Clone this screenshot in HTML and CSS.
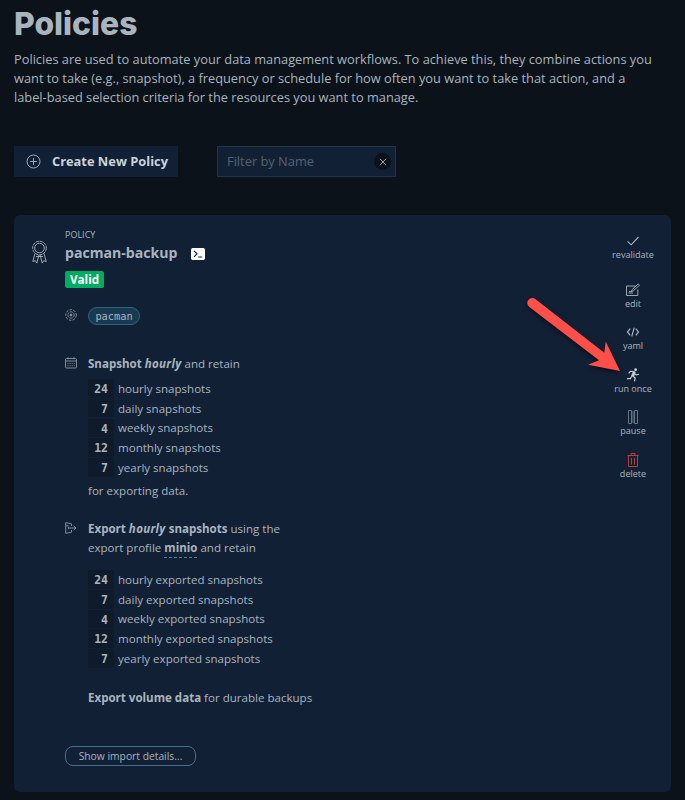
FILE: index.html
```html
<!DOCTYPE html>
<html lang="en">
<head>
<meta charset="utf-8">
<title>Policies</title>
<link rel="stylesheet" href="styles.css">
</head>
<body>
<main class="page">
  <h1 class="title">Policies</h1>
  <p class="intro">Policies are used to automate your data management workflows. To achieve this, they combine actions you<br>want to take (e.g., snapshot), a frequency or schedule for how often you want to take that action, and a<br>label-based selection criteria for the resources you want to manage.</p>

  <div class="toolbar">
    <button class="create">
      <svg width="15" height="15" viewBox="0 0 15 15"><circle cx="7.5" cy="7.5" r="6.5"/><path d="M7.5 4v7M4 7.5h7"/></svg>
      <span>Create New Policy</span>
    </button>
    <div class="filter">
      <span class="placeholder">Filter by Name</span>
      <span class="clear"><svg width="8" height="8" viewBox="0 0 8 8"><path d="M1 .8l6 6.4M7 .8L1 7.2"/></svg></span>
    </div>
  </div>

  <section class="card">
    <div class="badge-col">
      <svg class="ribbon" width="17" height="24" viewBox="0 0 17 24"><circle cx="8.5" cy="8" r="6.8" stroke-dasharray="3.2 .8" /><circle cx="8.5" cy="8" r="4.8"/><path d="M4 13.5L1.8 21.5l2.6-.8 1.4 2.4 2-8M13 13.5l2.2 8-2.6-.8-1.4 2.4-2-8M5 16.5h7"/></svg>
    </div>
    <div class="details">
      <div class="kicker">POLICY</div>
      <div class="name-row">
        <h2 class="name">pacman-backup</h2>
        <svg class="terminal" width="14" height="12" viewBox="0 0 14 12"><rect width="14" height="12" rx="1.8" fill="#fff" stroke="none"/><path d="M3 2.8l3 3-3 3M7.2 9h4" fill="none" stroke="#122036" stroke-width="1.2"/></svg>
      </div>
      <div class="status">Valid</div>

      <div class="item selector">
        <svg class="item-icon" width="12" height="12" viewBox="0 0 12 12"><circle cx="6" cy="6" r="5.3" stroke-dasharray="2.6 1.2"/><circle cx="6" cy="6" r="3.2" stroke-dasharray="2.8 .6"/><circle cx="6" cy="6" r="1" fill="#a9b5be"/></svg>
        <span class="pill">pacman</span>
      </div>

      <div class="item snapshot">
        <svg class="item-icon" width="12" height="12" viewBox="0 0 12 12"><path d="M1.5 1.5h9q1 0 1 1v7.500q0 1-1 1h-9q-1 0-1-1v-7.500q0-1 1-1zM.5 4h11M3 .3v2M9 .3v2"/><path d="M2.500 6.500h7.500M2.500 8.700h7.500" stroke-dasharray="1 1.100"/></svg>
        <div>
          <p class="line"><b>Snapshot <i>hourly</i></b> and retain</p>
          <ul class="counts">
            <li><b>24</b><span>hourly snapshots</span></li>
            <li><b>7</b><span>daily snapshots</span></li>
            <li><b>4</b><span>weekly snapshots</span></li>
            <li><b>12</b><span>monthly snapshots</span></li>
            <li><b>7</b><span>yearly snapshots</span></li>
          </ul>
          <p class="line after">for exporting data.</p>
        </div>
      </div>

      <div class="item export">
        <svg class="item-icon" width="12" height="12" viewBox="0 0 12 12"><path d="M6.500 4V1.800L.7.700v10.600l5.800-1.100V8M3.500 6h7.500M8.600 3.800L11 6 8.600 8.200M.7 3.800h3M3.500 4.800v2.400"/></svg>
        <div>
          <p class="line"><b>Export <i>hourly</i> snapshots</b> using the<br>export profile <b class="profile">minio</b> and retain</p>
          <ul class="counts exported">
            <li><b>24</b><span>hourly exported snapshots</span></li>
            <li><b>7</b><span>daily exported snapshots</span></li>
            <li><b>4</b><span>weekly exported snapshots</span></li>
            <li><b>12</b><span>monthly exported snapshots</span></li>
            <li><b>7</b><span>yearly exported snapshots</span></li>
          </ul>
          <p class="line volume"><b>Export volume data</b> for durable backups</p>
        </div>
      </div>

      <button class="import">Show import details...</button>
    </div>

    <nav class="actions">
      <a class="action"><svg width="14" height="14" viewBox="0 0 14 14"><path d="M1.500 7.300l3.700 3.500L12.500 3" stroke-width="1.100"/></svg>revalidate</a>
      <a class="action"><svg width="14" height="14" viewBox="0 0 14 14"><path d="M9.500 3H.5v9.500h11.300V6.500M2.500 10h4.500M5.500 8.500l.7-2 6-5.500 1.300 1.200-6 5.500zM3 8.500h3"/></svg>edit</a>
      <a class="action"><svg width="14" height="14" viewBox="0 0 14 14"><path d="M4.200 3.700L1.500 7l2.700 3.300M9.800 3.700L12.500 7l-2.700 3.300M8.200 2.700L5.800 11.300" stroke-width="1.200"/></svg>yaml</a>
      <a class="action"><svg width="14" height="14" viewBox="0 0 14 15"><circle cx="9.800" cy="1.900" r="1.500" fill="#c6cfd6" stroke="none"/><path d="M2.300 5.800l2-2.300 3.500.4M8.700 6l1.700 1.400 3-.7M7.300 9l2 1.700-.7 3.600M5.700 8.800l-1.500 2.500H.5" stroke="#c6cfd6" stroke-width="1.300"/><path d="M7.500 3.400l2 1L7.700 9.300 5.300 8.500z" fill="#c6cfd6" stroke="#c6cfd6" stroke-width=".7"/></svg>run once</a>
      <a class="action"><svg class="muted" width="14" height="14" viewBox="0 0 14 14"><path d="M2.500.5h3v13h-3zM8.500.5h3v13h-3z"/><path d="M6.500 1v12M7.500 1v12" opacity=".45"/></svg>pause</a>
      <a class="action"><svg class="danger" width="14" height="14" viewBox="0 0 14 14"><path d="M1.500 2.500h11M5 2.500V.5h4v2M2.500 2.500v11h9v-11M5.500 5v6.500M8.500 5v6.500"/></svg>delete</a>
    </nav>

    <svg class="pointer" width="120" height="100" viewBox="0 0 120 100"><path d="M17.600 6.200 L86.300 59.700 L87.700 48.500 L102 78 L70 71.700 L81 67.300 L11 13.800 A4.900 4.900 0 0 1 17.600 6.200Z" fill="#ff4f49"/></svg>
  </section>
</main>
</body>
</html>
```

FILE: styles.css
```css
* { box-sizing: border-box; }
body {
  margin: 0;
  background: #0b121a;
  color: #a9b5be;
  font-family: "Open Sans", "Noto Sans", sans-serif;
  font-size: 11.550px;
}
h1, h2, p, ul { margin: 0; padding: 0; }
svg { display: block; flex: none; fill: none; stroke: #a9b5be; stroke-width: .9; }
button { font: inherit; color: inherit; border: 0; padding: 0; }
b { font-weight: 700; }
b i { letter-spacing: .3px; }

.page { height: 800px; padding: 4px 14px 0; overflow: hidden; }
.title { font: 800 31.800px/40px Inter, sans-serif; }
.intro { margin-top: 6px; font-size: 12.800px; line-height: 19px; white-space: nowrap; }

.toolbar { display: flex; gap: 39px; margin-top: 39px; height: 31px; }
.create {
  display: flex; align-items: center; gap: 11px; width: 164px; padding-left: 12px;
  background: #122036; color: #cbd4da; font-size: 12.850px; font-weight: 700; white-space: nowrap;
}
.create span, .placeholder { padding-bottom: 2px; }
.filter {
  display: flex; align-items: center; justify-content: space-between; width: 179px;
  padding: 0 4px 0 9px; background: #122036; border: 1px solid #22334a;
}
.placeholder { color: #56636f; font-size: 12.850px; }
.clear { display: grid; place-items: center; width: 17px; height: 17px; border-radius: 50%; background: #0b121a; }

.card {
  position: relative; display: grid; grid-template-columns: 51px 1fr 76px;
  height: 577px; margin-top: 38px; background: #122036; border-radius: 6px;
}
.badge-col { padding: 25px 0 0 17px; }
.details { padding-top: 14px; }
.kicker { font-size: 9px; line-height: 12px; }
.name-row { display: flex; align-items: center; gap: 14px; height: 24px; }
.name { padding-bottom: 1px; font-size: 14.100px; line-height: 23px; font-weight: 700; }
.terminal { margin-top: 2px; }
.status {
  width: 39px; height: 17px; margin-top: 6px; border-radius: 2px; background: #00ab62;
  color: #fff; font-size: 11.700px; font-weight: 700; line-height: 17px; text-align: center;
}
.item { display: flex; gap: 11px; }
.item-icon { margin-top: 3px; opacity: .8; }
.selector { margin-top: 19px; height: 18px; }
.selector .item-icon { margin-top: 2px; }
.pill {
  width: 52px; height: 18px; border: 1px solid #2f6478; border-radius: 9px; background: #183a50;
  font: 10.300px/17px "DejaVu Sans Mono", monospace; text-align: center;
}
.snapshot { margin-top: 29.400px; }
.line { line-height: 19px; white-space: nowrap; }
.counts { list-style: none; margin-top: 5.300px; }
.counts li { display: flex; align-items: center; gap: 4px; height: 19.700px; }
.counts b {
  width: 26px; height: 18.500px; padding-right: 6px; background: #0f1a2a;
  font: 700 11.500px/20px "DejaVu Sans Mono", monospace; text-align: right;
}
.after { margin-top: 4.300px; }
.export { margin-top: 19px; }
.profile { padding-bottom: 1.500px; border-bottom: 1px dashed #4c8296; }
.exported { margin-top: 12.300px; }
.volume { margin-top: 20.200px; }
.import {
  display: block; width: 131px; height: 20px; margin-top: 38.300px; border: 1px solid #427088;
  border-radius: 8px; background: none; font-size: 10.300px; line-height: 18px; white-space: nowrap;
}

.actions { display: flex; flex-direction: column; padding-top: 19px; }
.action {
  display: flex; flex-direction: column; align-items: center; gap: 1px; height: 42.400px;
  font-size: 9.050px; line-height: 12px;
}
.action:first-child { height: 49px; }
.muted { stroke: #70808e; }
.danger { stroke: #ce3f39; }
.pointer {
  position: absolute; left: 504px; top: 78px; stroke: none; overflow: visible;
  filter: drop-shadow(0 2px 2px rgba(0, 0, 0, .55));
}
```
